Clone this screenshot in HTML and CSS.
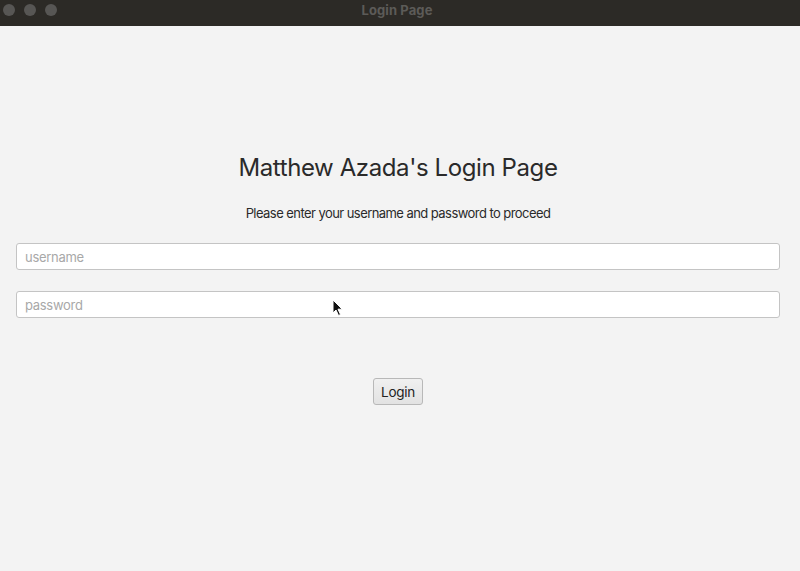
FILE: index.html
```html
<!DOCTYPE html>
<html>
<head>
<meta charset="utf-8">
<link rel="stylesheet" href="styles.css">
</head>
<body>
<div class="window">
  <div class="titlebar">
    <div class="lights"><span class="dot"></span><span class="dot"></span><span class="dot"></span></div>
    <div class="title">Login Page</div>
  </div>
  <main class="content">
    <h1 class="heading">Matthew Azada's Login Page</h1>
    <p class="subtitle">Please enter your username and password to proceed</p>
    <input class="field" type="text" placeholder="username">
    <input class="field" type="password" placeholder="password">
    <button class="btn">Login</button>
    <svg class="cursor" width="12" height="18" viewBox="0 0 12 18"><path d="M1 1 L1 14 L4 11 L6.5 16.5 L8.5 15.5 L6 10.2 L10.2 10.2 Z" fill="#111" stroke="#fff" stroke-width="1"/></svg>
  </main>
</div>
</body>
</html>
```
FILE: styles.css
```css
html, body { margin: 0; padding: 0; }
body { width: 800px; height: 571px; overflow: hidden; background: #f3f3f3; font-family: Inter, "Noto Sans", sans-serif; }
.window { display: flex; flex-direction: column; height: 571px; }
.titlebar { height: 26px; background: #2c2a26; position: relative; display: flex; align-items: center; justify-content: center; }
.lights { position: absolute; left: 3px; top: 4px; display: flex; gap: 9px; }
.dot { width: 12px; height: 12px; border-radius: 50%; background: #575654; display: block; }
.title { color: #5c5b58; font-weight: 700; font-size: 13px; margin-top: -6px; margin-left: -6px; letter-spacing: 0.1px; }
.content { position: relative; flex: 1; display: flex; flex-direction: column; align-items: center; padding-top: 126px; padding-right: 4px; }
.heading { margin: 0; font-size: 24px; font-weight: 400; line-height: 32px; height: 32px; color: #2a2a2a; letter-spacing: -0.4px; }
.subtitle { margin: 20px 0 0; font-size: 13px; line-height: 18px; color: #2a2a2a; letter-spacing: -0.56px; }
.field { box-sizing: border-box; align-self: flex-start; margin-left: 16px; width: 764px; height: 27px; border: 1px solid #c4c4c4; border-radius: 3px; background: #fff; padding: 0 8px; font-family: Inter, sans-serif; font-size: 13px; letter-spacing: -0.3px; color: #222; outline: none; }
.field::placeholder { color: #a8a8a8; }
.subtitle + .field { margin-top: 21px; }
.field + .field { margin-top: 21px; }
.btn { margin-top: 60px; width: 50px; height: 27px; box-sizing: border-box; border: 1px solid #b8b8b8; border-radius: 3px; background: linear-gradient(#f0f0f0, #e2e2e2); font-family: Inter, sans-serif; font-size: 13.5px; letter-spacing: -0.3px; color: #222; padding: 0; }
.cursor { position: absolute; left: 332px; top: 273px; }
```
